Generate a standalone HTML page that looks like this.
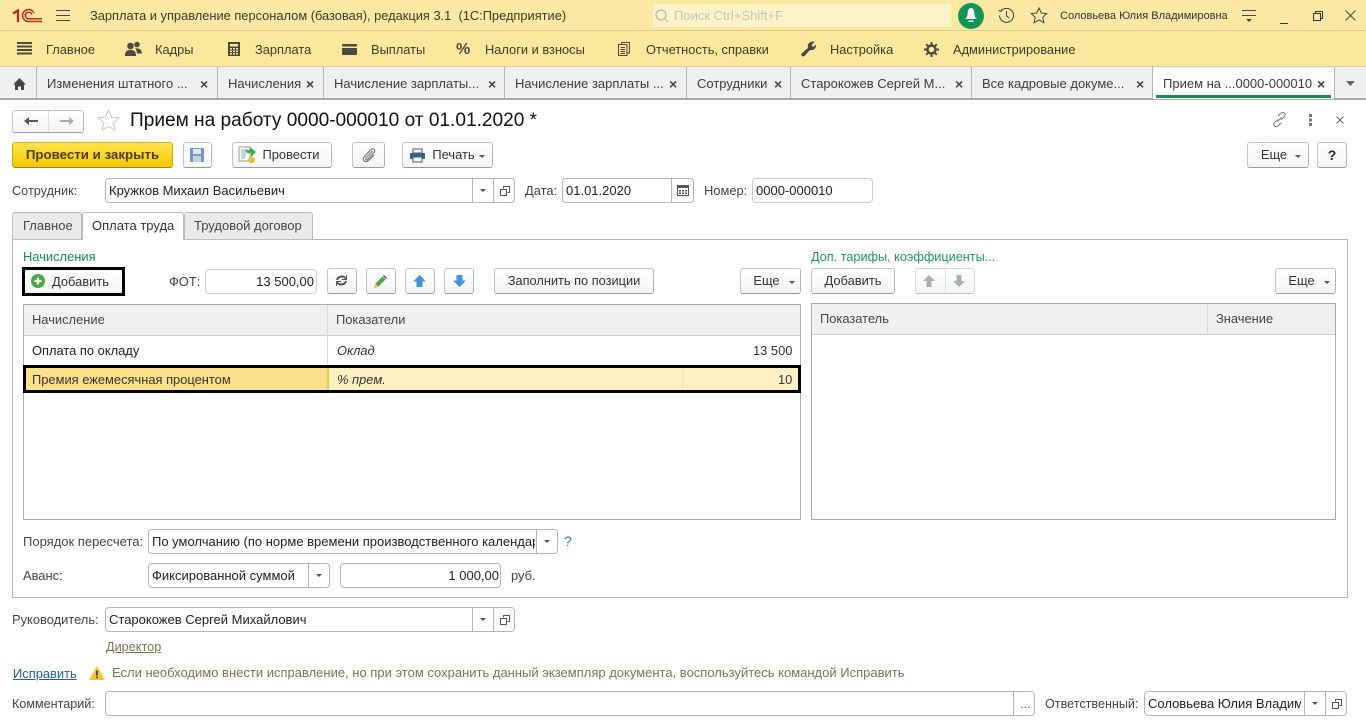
<!DOCTYPE html>
<html lang="ru"><head><meta charset="utf-8"><title>Прием на работу</title>
<style>
html,body{margin:0;padding:0}
body{width:1366px;height:728px;position:relative;overflow:hidden;background:#fff;font:12.9px/14px "Liberation Sans",sans-serif;color:#333}
.a,.t,.b,.f,.l{position:absolute;box-sizing:border-box}
.t{white-space:nowrap}
.b{background:linear-gradient(#fff,#f4f4f4);border:1px solid #c4c4c4;border-bottom:1px solid #9a9a9a;border-right-color:#b4b4b4;border-radius:3px;text-align:center;line-height:24px;white-space:nowrap;color:#333}
.f{background:#fff;border:1px solid #b5b5b5;border-radius:4px;line-height:22px;padding:0 3px;white-space:nowrap;overflow:hidden;color:#222;font-size:13px}
.l{background:#b5b5b5}
.m{font-size:12.85px;color:#3a3a2a}
.tab{color:#3c3c3c;font-size:13px}
.x{font-size:14px;font-weight:bold;color:#444}
svg{position:absolute;overflow:visible}
.tr{width:0;height:0;border-left:3px solid transparent;border-right:3px solid transparent;border-top:3px solid #555;position:absolute}
</style></head><body>

<!-- title bar -->
<div class="a" style="left:0;top:0;width:1366px;height:31px;background:#fbe9a3;border-bottom:1px solid #d8cd8a"></div>
<svg style="left:13px;top:9px" width="30" height="14" viewBox="0 0 30 14">
<path d="M0 4.500 5 1.500V13" fill="none" stroke="#c8261c" stroke-width="2.200"/>
<path d="M21 4A6 6 0 1 0 15.500 12.500H29M18.800 5.500A3.300 3.300 0 1 0 15.500 9.800H29" fill="none" stroke="#c8261c" stroke-width="1.500"/>
</svg>
<svg style="left:56px;top:10px" width="14" height="12"><path d="M0 .5H14M0 5.500H14M0 10.500H14" stroke="#444" fill="none"/></svg>
<div class="t m" style="left:90px;top:9px">Зарплата и управление персоналом (базовая), редакция 3.1&nbsp; (1С:Предприятие)</div>
<div class="a" style="left:653px;top:4px;width:298px;height:23px;background:#fdf3c8;border-radius:2px"></div>
<svg style="left:655px;top:9px" width="14" height="14"><circle cx="6" cy="6" r="5" fill="none" stroke="#aaa"/><path d="M10 10l3 3" stroke="#aaa"/></svg>
<div class="t" style="left:674px;top:9px;color:#c4c4b8;font-size:13px">Поиск Ctrl+Shift+F</div>
<div class="a" style="left:958px;top:3px;width:26px;height:26px;border-radius:50%;background:#129557"></div>
<svg style="left:963px;top:7px" width="16" height="17"><path d="M8 1C5.400 1 4.800 4 4.600 7 4.400 9.500 3.500 11 2 12H14C12.500 11 11.600 9.500 11.400 7 11.200 4 10.600 1 8 1Z" fill="#fff"/><path d="M5.500 13.500h5v1.500h-5z" fill="#fff"/></svg>
<svg style="left:997px;top:6px" width="19" height="19" fill="none" stroke="#444"><path d="M4 5A7 7 0 1 1 2.500 9.500"/><path d="M1.500 4.500 4 5.500 5 3"/><path d="M9.500 5V10L12.500 12"/></svg>
<svg style="left:1030px;top:7px" width="18" height="17"><path d="M9 1l2.300 5 5.500.6-4.100 3.700 1.200 5.400L9 13l-4.900 2.700 1.200-5.400L1.200 6.600 6.700 6z" fill="none" stroke="#444"/></svg>
<div class="t" style="left:1060px;top:9px;font-size:11px;color:#333">Соловьева Юлия Владимировна</div>
<svg style="left:1242px;top:10px" width="14" height="14"><path d="M0 .5H14M0 5.500H14" stroke="#444" fill="none"/><path d="M4 9h6l-3 3z" fill="#444"/></svg>
<svg style="left:1280px;top:14px" width="10" height="10"><path d="M0 9.500H8" stroke="#333" fill="none"/></svg>
<svg style="left:1313px;top:11px" width="11" height="11" fill="none" stroke="#333"><path d="M2.500 2.500V.5H9.500V7.500H7.500"/><path d="M.5 2.500H7.500V9.500H.5Z"/></svg>
<svg style="left:1345px;top:10px" width="11" height="11"><path d="M.5.5 10.500 10.500M10.500.5.5 10.500" stroke="#444" fill="none"/></svg>

<!-- menu -->
<div class="a" style="left:0;top:31px;width:1366px;height:36px;background:#fbe89d;border-bottom:1px solid #d9d0a0"></div>
<svg style="left:17px;top:42px" width="15" height="13"><path d="M0 1H15M0 4.500H15M0 8H15M0 11.500H15" stroke="#4a4a40" stroke-width="2"/></svg>
<div class="t m" style="left:46px;top:43px">Главное</div>
<svg style="left:125px;top:41px" width="17" height="16" fill="#4a4a40"><circle cx="5.500" cy="5" r="3.300"/><circle cx="12" cy="3.500" r="2.800"/><path d="M0 15c0-5 2-6 5.500-6s5.500 1 5.500 6zM10 7.500c4-.5 6.500.5 7 5h-5c0-2-1-4-2-5z"/></svg>
<div class="t m" style="left:155px;top:43px">Кадры</div>
<svg style="left:228px;top:42px" width="12" height="14"><rect width="12" height="14" fill="#4a4a40"/><rect x="2" y="2" width="8" height="2.500" fill="#fbe89d"/><path d="M2 6h2v1.500H2zM5 6h2v1.500H5zM8 6h2v1.500H8zM2 8.500h2V10H2zM5 8.500h2V10H5zM8 8.500h2V10H8zM2 11h2v1.500H2zM5 11h2v1.500H5zM8 11h2v1.500H8z" fill="#fbe89d"/></svg>
<div class="t m" style="left:255px;top:43px">Зарплата</div>
<svg style="left:342px;top:44px" width="15" height="11"><rect width="15" height="11" rx="1" fill="#4a4a40"/><rect x="0" y="2.500" width="15" height="1.500" fill="#fbe89d"/></svg>
<div class="t m" style="left:371px;top:43px">Выплаты</div>
<div class="t" style="left:456px;top:41px;font-size:16px;line-height:18px;font-weight:bold;color:#4a4a40">%</div>
<div class="t m" style="left:485px;top:43px">Налоги и взносы</div>
<svg style="left:618px;top:42px" width="12" height="14" fill="none" stroke="#4a4a40"><path d="M3.500 2.500V.5H11.500V11H9.500"/><path d="M.5 2.500H9V13.500H.5Z"/><path d="M2.500 5.500H7M2.500 7.500H7M2.500 9.500H7M2.500 11.500H7"/></svg>
<div class="t m" style="left:646px;top:43px">Отчетность, справки</div>
<svg style="left:801px;top:41px" width="16" height="16" fill="#4a4a40"><path d="M1 15c-1-1-1-2 0-3L7 7C6 4 8 .5 12 .5c1 0 1.500.5 1.500.5L10.500 4l1.500 2 3-2.500c.5 3-2 6.500-6 5.500L4 14.500c-1 1-2 1.500-3 .5z"/></svg>
<div class="t m" style="left:830px;top:43px">Настройка</div>
<svg style="left:924px;top:42px" width="15" height="15"><circle cx="7.500" cy="7.500" r="4" fill="none" stroke="#4a4a40" stroke-width="2.400"/><path d="M7.500 0v15M0 7.500h15M2.200 2.200l10.600 10.600M12.800 2.200 2.200 12.800" stroke="#4a4a40" stroke-width="2" stroke-dasharray="2.600 9.800"/></svg>
<div class="t m" style="left:953px;top:43px">Администрирование</div>

<!-- tabs -->
<div class="a" style="left:0;top:67px;width:1366px;height:32px;background:#f0f0f0"></div>
<div class="a" style="left:0;top:98px;width:1366px;height:2px;background:#a8a8a8"></div>
<div class="a" style="left:1153px;top:68px;width:181px;height:31px;background:#fff"></div>
<div class="a" style="left:1156px;top:95px;width:175px;height:3px;background:#1c8a55"></div>
<svg style="left:13px;top:78px" width="13" height="12" fill="#444"><path d="M6.500 0 0 6.500h2V12h3V8.500h3V12h3V6.500h2z"/></svg>
<div class="l" style="left:36px;top:67px;width:1px;height:31px"></div>
<div class="l" style="left:217px;top:67px;width:1px;height:31px"></div>
<div class="l" style="left:323px;top:67px;width:1px;height:31px"></div>
<div class="l" style="left:504px;top:67px;width:1px;height:31px"></div>
<div class="l" style="left:686px;top:67px;width:1px;height:31px"></div>
<div class="l" style="left:790px;top:67px;width:1px;height:31px"></div>
<div class="l" style="left:971px;top:67px;width:1px;height:31px"></div>
<div class="l" style="left:1152px;top:67px;width:1px;height:31px"></div>
<div class="l" style="left:1334px;top:67px;width:1px;height:31px"></div>
<div class="t tab" style="left:47px;top:77px">Изменения штатного ...</div><div class="t x" style="left:200px;top:77px">×</div>
<div class="t tab" style="left:228px;top:77px">Начисления</div><div class="t x" style="left:306px;top:77px">×</div>
<div class="t tab" style="left:334px;top:77px">Начисление зарплаты...</div><div class="t x" style="left:488px;top:77px">×</div>
<div class="t tab" style="left:515px;top:77px">Начисление зарплаты ...</div><div class="t x" style="left:669px;top:77px">×</div>
<div class="t tab" style="left:697px;top:77px">Сотрудники</div><div class="t x" style="left:774px;top:77px">×</div>
<div class="t tab" style="left:801px;top:77px">Старокожев Сергей М...</div><div class="t x" style="left:955px;top:77px">×</div>
<div class="t tab" style="left:982px;top:77px">Все кадровые докуме...</div><div class="t x" style="left:1136px;top:77px">×</div>
<div class="t tab" style="left:1163px;top:77px">Прием на ...0000-000010</div><div class="t x" style="left:1317px;top:77px">×</div>
<svg style="left:1346px;top:81px" width="9" height="6"><path d="M0 0h9L4.500 5z" fill="#666"/></svg>

<!-- form header -->
<div class="b" style="left:12px;top:110px;width:72px;height:23px"></div>
<div class="a" style="left:48px;top:111px;width:1px;height:20px;background:#ddd"></div>
<svg style="left:24px;top:116px" width="14" height="10"><path d="M0 5 5 1v3h9v2H5v3z" fill="#555"/></svg>
<svg style="left:60px;top:116px" width="14" height="10"><path d="M14 5 9 1v3H0v2h9v3z" fill="#aaa"/></svg>
<svg style="left:97px;top:109px" width="23" height="22"><path d="M11.500 1l3 7 7.500.8-5.600 5 1.600 7.400-6.500-3.800L5 21.200l1.600-7.400L1 8.800 8.500 8z" fill="#fff" stroke="#c8c8c8"/></svg>
<div class="t" style="left:130px;top:111px;font-size:19.1px;line-height:20px;color:#111">Прием на работу 0000-000010 от 01.01.2020 *</div>
<svg style="left:1272px;top:112px" width="15" height="15" fill="none" stroke="#777"><path d="M6 4 8.500 1.500c1.500-1.500 3-1.500 4 -.5s1 2.500-.5 4L9 8M9 11l-2.500 2.500c-1.500 1.500-3 1.500-4 .5s-1-2.500.5-4L6 7.500M5.500 9.500 9.500 5.500"/></svg>
<svg style="left:1309px;top:114px" width="3" height="12" fill="#777"><rect width="3" height="3"/><rect y="4.500" width="3" height="3"/><rect y="9" width="3" height="3"/></svg>
<svg style="left:1336px;top:116px" width="8" height="8"><path d="M.5.5 7.500 7.500M7.500.5.5 7.500" stroke="#666" fill="none"/></svg>

<!-- command bar -->
<div class="b" style="left:12px;top:142px;width:161px;height:26px;background:linear-gradient(#ffe44d,#f5c800);border-color:#d9b400 #c9a800 #a08600;font-weight:bold;color:#4a4000;font-size:13.300px">Провести и закрыть</div>
<div class="b" style="left:183px;top:142px;width:29px;height:26px"></div>
<svg style="left:190px;top:148px" width="14" height="14"><rect width="14" height="14" rx="1" fill="#7198bd"/><rect x="3" y="1" width="8" height="5" fill="#dfe8f0"/><rect x="3" y="8" width="8" height="6" fill="#c4d4e2"/></svg>
<div class="b" style="left:232px;top:142px;width:100px;height:26px;padding-left:18px">Провести</div>
<svg style="left:239px;top:147px" width="17" height="16"><rect x="0" y="0" width="11" height="14" fill="#fff" stroke="#999"/><path d="M2 3h7M2 5h5M2 7h5M2 9h5M2 11h4" stroke="#8ab" fill="none"/><path d="M6 3h5V0l6 5-5 5V6H8z" fill="#35b04e"/><ellipse cx="12.500" cy="13" rx="3.500" ry="3" fill="#e9bd2e"/></svg>
<div class="b" style="left:352px;top:142px;width:33px;height:26px"></div>
<svg style="left:361px;top:148px" width="15" height="15" fill="none" stroke="#888" stroke-width="1.300"><path d="M11.500 3 5 10c-1 1.200.5 2.500 1.500 1.500L13 4.500c2-2.200-1-5-3-3L3 9c-2.500 3 1.500 6.500 4.500 3.500L13 7"/></svg>
<div class="b" style="left:402px;top:142px;width:91px;height:26px;padding-left:18px;padding-right:6px">Печать</div>
<svg style="left:410px;top:149px" width="15" height="13"><rect x="3" y="0" width="9" height="4" fill="#fff" stroke="#35607f"/><rect x="0" y="4" width="15" height="6" rx="1" fill="#35607f"/><rect x="3" y="8" width="9" height="5" fill="#fff" stroke="#35607f"/></svg>
<div class="tr" style="left:479px;top:155px"></div>
<div class="b" style="left:1247px;top:142px;width:62px;height:26px;padding-right:8px">Еще</div><div class="tr" style="left:1295px;top:155px"></div>
<div class="b" style="left:1317px;top:142px;width:30px;height:26px;font-weight:bold;font-size:14px;color:#222">?</div>

<!-- сотрудник row -->
<div class="t" style="left:12px;top:184px;color:#444;font-size:12.7px">Сотрудник:</div>
<div class="f" style="left:105px;top:178px;width:410px;height:25px;line-height:23px">Кружков Михаил Васильевич</div>
<div class="l" style="left:472px;top:179px;width:1px;height:23px"></div><div class="l" style="left:493px;top:179px;width:1px;height:23px"></div>
<div class="tr" style="left:480px;top:189px"></div>
<svg style="left:500px;top:186px" width="10" height="10" fill="none" stroke="#555"><path d="M3.500 2.500V.5H9.500V6.500H7.500"/><path d="M.5 3.500H6.500V9.500H.5Z"/></svg>
<div class="t" style="left:525px;top:184px;color:#444">Дата:</div>
<div class="f" style="left:562px;top:178px;width:132px;height:25px;line-height:23px">01.01.2020</div>
<div class="l" style="left:671px;top:179px;width:1px;height:23px"></div>
<svg style="left:677px;top:184px" width="12" height="12"><rect x=".5" y="1.500" width="11" height="10" fill="none" stroke="#555"/><rect y="1" width="12" height="3" fill="#555"/><path d="M2 6h2v1.500H2zM5 6h2v1.500H5zM8 6h2v1.500H8zM2 8.500h2V10H2zM5 8.500h2V10H5zM8 8.500h2V10H8z" fill="#555"/></svg>
<div class="t" style="left:704px;top:184px;color:#444">Номер:</div>
<div class="f" style="left:752px;top:178px;width:121px;height:25px;line-height:23px;border-color:#ccc">0000-000010</div>

<!-- page tabs -->
<div class="a" style="left:12px;top:239px;width:1336px;height:359px;border:1px solid #b5b5b5"></div>
<div class="a" style="left:12px;top:212px;width:70px;height:28px;background:#eaeaea;border:1px solid #bbb;border-radius:3px 3px 0 0"></div>
<div class="a" style="left:82px;top:212px;width:102px;height:28px;background:#fff;border:1px solid #bbb;border-bottom:0;border-radius:3px 3px 0 0"></div>
<div class="a" style="left:184px;top:212px;width:129px;height:28px;background:#eaeaea;border:1px solid #bbb;border-radius:3px 3px 0 0"></div>
<div class="t" style="left:23px;top:219px;color:#444;font-size:13px">Главное</div>
<div class="t" style="left:92px;top:219px;color:#333;font-size:13px">Оплата труда</div>
<div class="t" style="left:194px;top:219px;color:#444;font-size:13px">Трудовой договор</div>

<div class="t" style="left:23px;top:250px;color:#1a8a50">Начисления</div>
<div class="t" style="left:811px;top:250px;color:#1a9a5a;font-size:12.7px">Доп. тарифы, коэффициенты...</div>

<!-- left toolbar -->
<div class="b" style="left:24px;top:269px;width:99px;height:25px;padding-left:14px">Добавить</div>
<div class="a" style="left:22px;top:267px;width:103px;height:29px;border:3px solid #000"></div>
<div class="a" style="left:31px;top:274px;width:14px;height:14px;border-radius:50%;background:#45a845"></div>
<svg style="left:31px;top:274px" width="14" height="14"><path d="M3.500 7h7M7 3.500v7" stroke="#fff" stroke-width="2.200"/></svg>
<div class="t" style="left:169px;top:275px;color:#444">ФОТ:</div>
<div class="f" style="left:205px;top:269px;width:112px;height:25px;line-height:23px;text-align:right;padding-right:2px;border-color:#d0d0d0">13 500,00</div>
<div class="b" style="left:327px;top:268px;width:30px;height:26px"></div>
<svg style="left:336px;top:275px" width="11" height="11" fill="none" stroke="#555" stroke-width="2"><path d="M1 5C2 1.500 7 0 10 3.500M10 6C9 9.500 4 11 1 7.500"/><path d="M10.500 0v4.500H6M.5 11V6.500H5" stroke-width="1"/></svg>
<div class="b" style="left:366px;top:268px;width:30px;height:26px"></div>
<svg style="left:374px;top:275px" width="13" height="13"><path d="M0 13 1.500 8.500 8.500 1.500l3 3-7 7z" fill="#4ca64c"/><path d="M0 13 1.500 8.500l3 3z" fill="#e9b56a"/><path d="M9 1l1-1 3 3-1 1z" fill="#2a6a3a"/></svg>
<div class="b" style="left:405px;top:268px;width:30px;height:26px"></div>
<svg style="left:413px;top:275px" width="13" height="12"><path d="M6.500 0 13 6.500H9.500V12h-6V6.500H0z" fill="#3d96d6"/></svg>
<div class="b" style="left:444px;top:268px;width:30px;height:26px"></div>
<svg style="left:453px;top:275px" width="13" height="12"><path d="M6.500 12 13 5.500H9.500V0h-6V5.500H0z" fill="#3d96d6"/></svg>
<div class="b" style="left:494px;top:268px;width:160px;height:26px;font-size:12.8px">Заполнить по позиции</div>
<div class="b" style="left:740px;top:268px;width:61px;height:26px;padding-right:8px">Еще</div><div class="tr" style="left:789px;top:281px"></div>

<!-- right toolbar -->
<div class="b" style="left:811px;top:268px;width:84px;height:26px">Добавить</div>
<div class="b" style="left:915px;top:268px;width:60px;height:26px;border-color:#d8d8d8;border-bottom-color:#c0c0c0"></div>
<div class="a" style="left:945px;top:269px;width:1px;height:23px;background:#ddd"></div>
<svg style="left:923px;top:275px" width="12" height="12"><path d="M6 0 12 6H8.500v6h-5V6H0z" fill="#a8b0b4"/></svg>
<svg style="left:953px;top:275px" width="12" height="12"><path d="M6 12 12 6H8.500V0h-5V6H0z" fill="#a8b0b4"/></svg>
<div class="b" style="left:1275px;top:268px;width:61px;height:26px;padding-right:8px">Еще</div><div class="tr" style="left:1324px;top:281px"></div>

<!-- left table -->
<div class="a" style="left:23px;top:304px;width:778px;height:216px;border:1px solid #a8a8a8;background:#fff"></div>
<div class="a" style="left:24px;top:305px;width:776px;height:31px;background:#f0f0f0;border-bottom:1px solid #ccc"></div>
<div class="a" style="left:327px;top:305px;width:1px;height:59px;background:#d8d8d8"></div>
<div class="t" style="left:32px;top:313px;color:#444">Начисление</div>
<div class="t" style="left:336px;top:313px;color:#444">Показатели</div>
<div class="t" style="left:32px;top:344px;color:#222">Оплата по окладу</div>
<div class="t" style="left:337px;top:344px;font-style:italic;color:#333">Оклад</div>
<div class="t" style="left:753px;top:344px;color:#333">13 500</div>
<div class="a" style="left:24px;top:365px;width:304px;height:27px;background:#fce08a"></div>
<div class="a" style="left:328px;top:365px;width:472px;height:27px;background:#fdf1c4"></div>
<div class="a" style="left:327px;top:367px;width:2px;height:23px;background:#ecc850"></div>
<div class="a" style="left:682px;top:367px;width:1px;height:23px;background:#f5e6a8"></div>
<div class="a" style="left:23px;top:365px;width:778px;height:28px;border:3px solid #000"></div>
<div class="t" style="left:32px;top:373px;color:#333">Премия ежемесячная процентом</div>
<div class="t" style="left:337px;top:373px;font-style:italic;color:#333">% прем.</div>
<div class="t" style="left:778px;top:373px;color:#333">10</div>

<!-- right table -->
<div class="a" style="left:811px;top:303px;width:525px;height:217px;border:1px solid #a8a8a8;background:#fff"></div>
<div class="a" style="left:812px;top:304px;width:523px;height:31px;background:#f0f0f0;border-bottom:1px solid #ccc"></div>
<div class="a" style="left:1207px;top:304px;width:1px;height:31px;background:#d8d8d8"></div>
<div class="t" style="left:820px;top:312px;color:#444">Показатель</div>
<div class="t" style="left:1216px;top:312px;color:#444">Значение</div>

<!-- bottom of panel -->
<div class="t" style="left:23px;top:535px;color:#444;font-size:13px">Порядок пересчета:</div>
<div class="f" style="left:148px;top:529px;width:410px;height:25px;line-height:23px">
<span style="display:block;width:383px;overflow:hidden">По умолчанию (по норме времени производственного календаря)</span></div>
<div class="l" style="left:536px;top:530px;width:1px;height:23px"></div>
<div class="tr" style="left:544px;top:540px"></div>
<div class="t" style="left:564px;top:534px;color:#2a7fb8;font-size:14px">?</div>
<div class="t" style="left:23px;top:569px;color:#444">Аванс:</div>
<div class="f" style="left:148px;top:563px;width:182px;height:25px;line-height:23px">Фиксированной суммой</div>
<div class="l" style="left:308px;top:564px;width:1px;height:23px"></div>
<div class="tr" style="left:316px;top:574px"></div>
<div class="f" style="left:340px;top:563px;width:161px;height:25px;line-height:23px;text-align:right;padding-right:1px">1 000,00</div>
<div class="t" style="left:511px;top:569px;color:#444">руб.</div>

<!-- bottom -->
<div class="t" style="left:12px;top:613px;color:#444;font-size:12.9px">Руководитель:</div>
<div class="f" style="left:105px;top:607px;width:410px;height:25px;line-height:23px">Старокожев Сергей Михайлович</div>
<div class="l" style="left:472px;top:608px;width:1px;height:23px"></div><div class="l" style="left:493px;top:608px;width:1px;height:23px"></div>
<div class="tr" style="left:480px;top:618px"></div>
<svg style="left:500px;top:615px" width="10" height="10" fill="none" stroke="#555"><path d="M3.500 2.500V.5H9.500V6.500H7.500"/><path d="M.5 3.500H6.500V9.500H.5Z"/></svg>
<div class="t" style="left:106px;top:640px;color:#7d7355;text-decoration:underline;font-size:12.7px">Директор</div>
<div class="t" style="left:13px;top:667px;color:#1d5fa8;text-decoration:underline;font-size:12.9px">Исправить</div>
<svg style="left:89px;top:666px" width="16" height="14"><path d="M8 0 16 14H0z" fill="#f2c531"/><path d="M7.200 4.500h1.600v5H7.200zM7.200 10.500h1.600v1.700H7.200z" fill="#333"/></svg>
<div class="t" style="left:112px;top:666px;color:#7d7355;font-size:13px">Если необходимо внести исправление, но при этом сохранить данный экземпляр документа, воспользуйтесь командой Исправить</div>
<div class="t" style="left:12px;top:697px;color:#444;font-size:12.6px">Комментарий:</div>
<div class="f" style="left:105px;top:691px;width:930px;height:25px;line-height:23px"></div>
<div class="l" style="left:1013px;top:692px;width:1px;height:23px"></div>
<div class="t" style="left:1020px;top:697px;color:#666">...</div>
<div class="t" style="left:1045px;top:697px;color:#444;font-size:12.6px">Ответственный:</div>
<div class="f" style="left:1144px;top:691px;width:203px;height:25px;line-height:23px"><span style="display:block;width:153px;overflow:hidden">Соловьева Юлия Владимировна</span></div>
<div class="l" style="left:1304px;top:692px;width:1px;height:23px"></div><div class="l" style="left:1325px;top:692px;width:1px;height:23px"></div>
<div class="tr" style="left:1312px;top:702px"></div>
<svg style="left:1332px;top:699px" width="10" height="10" fill="none" stroke="#555"><path d="M3.500 2.500V.5H9.500V6.500H7.500"/><path d="M.5 3.500H6.500V9.500H.5Z"/></svg>
</body></html>
